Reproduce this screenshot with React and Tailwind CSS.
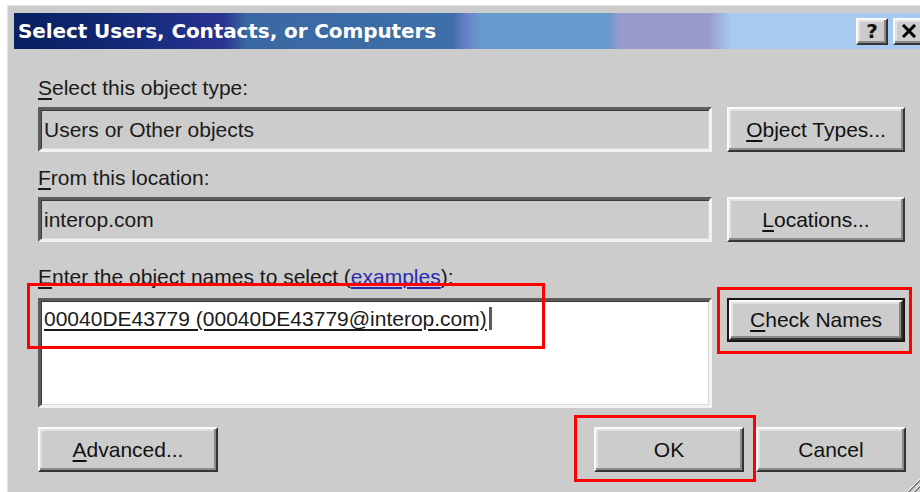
import React from "react";

// Classic 3D raised button face
function Raised({ className = "", children }) {
  return (
    <div
      className={`flex items-center justify-center bg-[#cccccc] border-2 border-t-[#fafafa] border-l-[#fafafa] border-r-[#353535] border-b-[#353535] shadow-[inset_-2px_-2px_0_#8a8a8a,inset_2px_2px_0_#e2e2e2] text-[#111] ${className}`}
    >
      {children}
    </div>
  );
}

// Sunken edit field
function Sunken({ className = "", children }) {
  return (
    <div
      className={`border-[3px] border-t-[#5c5c5c] border-l-[#5c5c5c] border-r-[#f2f2f2] border-b-[#f2f2f2] shadow-[inset_1px_1px_0_#3a3a3a,inset_-1px_-1px_0_#dadada] ${className}`}
    >
      {children}
    </div>
  );
}

function Key({ children }) {
  return <u className="underline decoration-[1.5px] underline-offset-[3px]">{children}</u>;
}

export default function App() {
  return (
    <div className="relative w-[920px] h-[492px] overflow-hidden bg-white font-['Liberation_Sans',Arial,sans-serif] text-[21px] leading-[22px] text-[#1a1a1a]">
      <div className="ml-[7px] mt-[5px] w-[930px] h-[500px] bg-[#cccccc] border-t border-l border-[#e2e2e2] pt-[7px] pl-[6px]">
        {/* title bar */}
        <div className="w-[913px] h-[36px] flex items-center pl-[4px] pr-[2px] bg-[linear-gradient(to_right,#08205f_0%,#142a78_13%,#2a3392_23%,#3a68a2_25.5%,#3d6fa8_48%,#6a80c8_49.5%,#6699cc_51%,#6699cc_65%,#9a9acc_66.5%,#9999cc_76%,#a6caf0_78.5%,#a6caf0_100%)]">
          <span className="font-['DejaVu_Sans',sans-serif] font-bold text-[20px] text-white tracking-[-0.1px]">
            Select Users, Contacts, or Computers
          </span>
          <div className="ml-auto flex gap-[5px]">
            <Raised className="w-[32px] h-[27px]">
              <span className="font-['DejaVu_Sans',sans-serif] font-bold text-[20px] leading-none">?</span>
            </Raised>
            <Raised className="w-[32px] h-[27px]">
              <svg width="16" height="14" viewBox="0 0 16 14">
                <path d="M2 1 L14 13 M14 1 L2 13" stroke="#000" strokeWidth="3" />
              </svg>
            </Raised>
          </div>
        </div>

        {/* dialog body */}
        <div className="pl-[24px]">
          <div className="mt-[28px]">
            <Key>S</Key>elect this object type:
          </div>
          <div className="mt-[8px] flex gap-[15px]">
            <Sunken className="w-[674px] h-[45px] flex items-center pl-[3px]">Users or Other objects</Sunken>
            <Raised className="w-[178px] h-[45px]">
              <span>
                <Key>O</Key>bject Types...
              </span>
            </Raised>
          </div>

          <div className="mt-[15px]">
            <Key>F</Key>rom this location:
          </div>
          <div className="mt-[8px] flex gap-[15px]">
            <Sunken className="w-[674px] h-[45px] flex items-center pl-[3px]">interop.com</Sunken>
            <Raised className="w-[178px] h-[45px]">
              <span>
                <Key>L</Key>ocations...
              </span>
            </Raised>
          </div>

          <div className="mt-[24px]">
            <Key>E</Key>nter the object names to select (
            <span className="text-[#2b2bb0] underline decoration-[1.5px] underline-offset-[3px]">examples</span>):
          </div>
          <div className="mt-[10px] flex gap-[15px] items-start">
            <Sunken className="w-[674px] h-[110px] bg-white pl-[3px] pt-[6px]">
              <div className="flex items-center">
                <span className="underline decoration-[1.5px] underline-offset-[3px]">
                  00040DE43779 (00040DE43779@interop.com)
                </span>
                <span className="ml-[2px] w-[3px] h-[23px] bg-[#5a5a5a]" />
              </div>
            </Sunken>
            <div className="w-[178px] h-[44px] border-2 border-[#161616] flex">
              <Raised className="flex-1">
                <span>
                  <Key>C</Key>heck Names
                </span>
              </Raised>
            </div>
          </div>

          <div className="mt-[19px] w-[868px] flex justify-between">
            <Raised className="w-[180px] h-[45px]">
              <span>
                <Key>A</Key>dvanced...
              </span>
            </Raised>
            <div className="flex gap-[12px]">
              <Raised className="w-[150px] h-[45px]">OK</Raised>
              <Raised className="w-[150px] h-[45px]">Cancel</Raised>
            </div>
          </div>
        </div>
      </div>

      {/* size grip */}
      <svg className="absolute right-0 bottom-0" width="16" height="16" viewBox="0 0 16 16">
        <path d="M16 3 L3 16 M16 9 L9 16" stroke="#ffffff" strokeWidth="1" />
        <path d="M16 4 L4 16 M16 5 L5 16 M16 10 L10 16 M16 11 L11 16" stroke="#7a7a7a" strokeWidth="1" />
      </svg>

      {/* red annotation frames */}
      <div className="absolute left-[27px] top-[283px] w-[518px] h-[66px] border-[3px] border-[#ff0000]" />
      <div className="absolute left-[717px] top-[287px] w-[195px] h-[67px] border-[3px] border-[#ff0000]" />
      <div className="absolute left-[574px] top-[415px] w-[182px] h-[67px] border-[3px] border-[#ff0000]" />
    </div>
  );
}
